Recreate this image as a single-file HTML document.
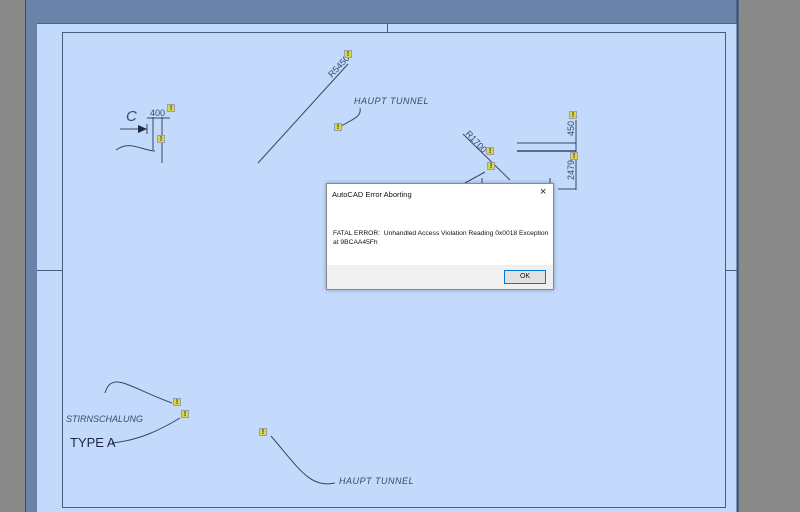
<!DOCTYPE html>
<html><head><style>
html,body{margin:0;padding:0;width:800px;height:512px;overflow:hidden;background:#8a8a8a;font-family:"Liberation Sans",sans-serif}
.w{position:absolute;width:8px;height:8px;background:#d9d64a;border:1px solid #9aa0a8;box-sizing:border-box;font:bold 7px/7px "Liberation Sans",sans-serif;color:#333;text-align:center}
</style></head><body>
<svg width="800" height="512" style="position:absolute;left:0;top:0" xmlns="http://www.w3.org/2000/svg">
<rect x="25" y="0" width="714" height="512" fill="#6a83a9"/>
<rect x="25" y="0" width="1" height="512" fill="#3d4f6b"/>
<rect x="37" y="23" width="700" height="489" fill="#c3dafc"/>
<line x1="37" y1="23.5" x2="737" y2="23.5" stroke="#4d6285" stroke-width="1"/>
<line x1="737.5" y1="0" x2="737.5" y2="512" stroke="#3d4f6b" stroke-width="2"/>
<rect x="62.5" y="32.5" width="663" height="475" fill="none" stroke="#4d5d78" stroke-width="1"/>
<line x1="387.5" y1="23" x2="387.5" y2="32" stroke="#4d5d78"/>
<line x1="37" y1="270.5" x2="62" y2="270.5" stroke="#4d5d78"/>
<line x1="726" y1="270.5" x2="737" y2="270.5" stroke="#4d5d78"/>
<g stroke="#3a4660" fill="none" stroke-width="1">
<line x1="258" y1="163" x2="348" y2="64"/>
<path d="M120 129 L147 129" /><path d="M147 124 L147 134"/>
<path d="M116 150 C130 140 140 150 155 151"/>
<line x1="153" y1="117" x2="153" y2="150"/><line x1="162" y1="117" x2="162" y2="163"/>
<line x1="147" y1="118" x2="170" y2="118"/>
<path d="M336 129 C350 120 362 118 360 108"/>
<line x1="463" y1="134" x2="510" y2="180"/>
<path d="M465 183 L485 172"/>
<line x1="517" y1="143" x2="576" y2="143"/>
<line x1="517" y1="151" x2="576" y2="151" stroke-width="1.5"/>
<line x1="576" y1="120" x2="576" y2="190"/>
<line x1="558" y1="189" x2="576" y2="189"/>
<line x1="482" y1="178" x2="482" y2="184"/><line x1="550" y1="178" x2="550" y2="184"/>
<path d="M105 393 C112 370 130 388 172 403"/>
<path d="M112 443 C140 440 160 430 180 418"/>
<path d="M271 436 C300 470 310 488 335 483"/>
</g>
<polygon points="138,125 147,129 138,133" fill="#1f2a3d"/>
<g font-family="Liberation Sans,sans-serif" fill="#3a4a6a" font-style="italic">
<text x="126" y="121" font-size="15" font-style="italic">C</text>
<text x="150" y="116" font-size="9" font-style="normal">400</text>
<text x="354" y="104" font-size="9" letter-spacing="0.5">HAUPT  TUNNEL</text>
<text x="66" y="422" font-size="9">STIRNSCHALUNG</text>
<text x="339" y="484" font-size="9" letter-spacing="0.5">HAUPT  TUNNEL</text>
<text x="0" y="0" font-size="9" font-style="normal" transform="translate(332,78) rotate(-47)">R5450</text>
<text x="0" y="0" font-size="9" font-style="normal" transform="translate(465,134) rotate(47)">R1700</text>
<text x="0" y="0" font-size="9" font-style="normal" transform="translate(574,136) rotate(-90)">450</text>
<text x="0" y="0" font-size="9" font-style="normal" transform="translate(574,180) rotate(-90)">2479</text>
</g>
<text x="70" y="447" font-size="13" fill="#1c2540" font-family="Liberation Sans,sans-serif">TYPE A</text>
</svg>
<div class="w" style="left:344px;top:50px">!</div>
<div class="w" style="left:167px;top:104px">!</div>
<div class="w" style="left:157px;top:135px">!</div>
<div class="w" style="left:334px;top:123px">!</div>
<div class="w" style="left:486px;top:147px">!</div>
<div class="w" style="left:487px;top:162px">!</div>
<div class="w" style="left:569px;top:111px">!</div>
<div class="w" style="left:570px;top:152px">!</div>
<div class="w" style="left:173px;top:398px">!</div>
<div class="w" style="left:181px;top:410px">!</div>
<div class="w" style="left:259px;top:428px">!</div>
<div style="position:absolute;left:326px;top:183px;width:226px;height:105px;background:#fff;border:1px solid #8a8a8a;box-shadow:0 0 4px rgba(0,0,0,.3)">
<div style="position:absolute;left:5px;top:6px;font-size:7.5px;color:#111;white-space:nowrap">AutoCAD Error Aborting</div>
<div style="position:absolute;left:213px;top:2px;font-size:11px;color:#222">×</div>
<div style="position:absolute;left:6px;top:45px;font-size:6.7px;line-height:9px;color:#111;white-space:nowrap">FATAL ERROR:&nbsp; Unhandled Access Violation Reading 0x0018 Exception<br>at 9BCAA45Fh</div>
<div style="position:absolute;left:0;top:81px;width:226px;height:24px;background:#f0f0f0"></div>
<div style="position:absolute;left:177px;top:86px;width:40px;height:12px;background:#e1e1e1;border:1px solid #0078d7;font-size:7px;line-height:12px;text-align:center;color:#111">OK</div>
</div>
</body></html>
